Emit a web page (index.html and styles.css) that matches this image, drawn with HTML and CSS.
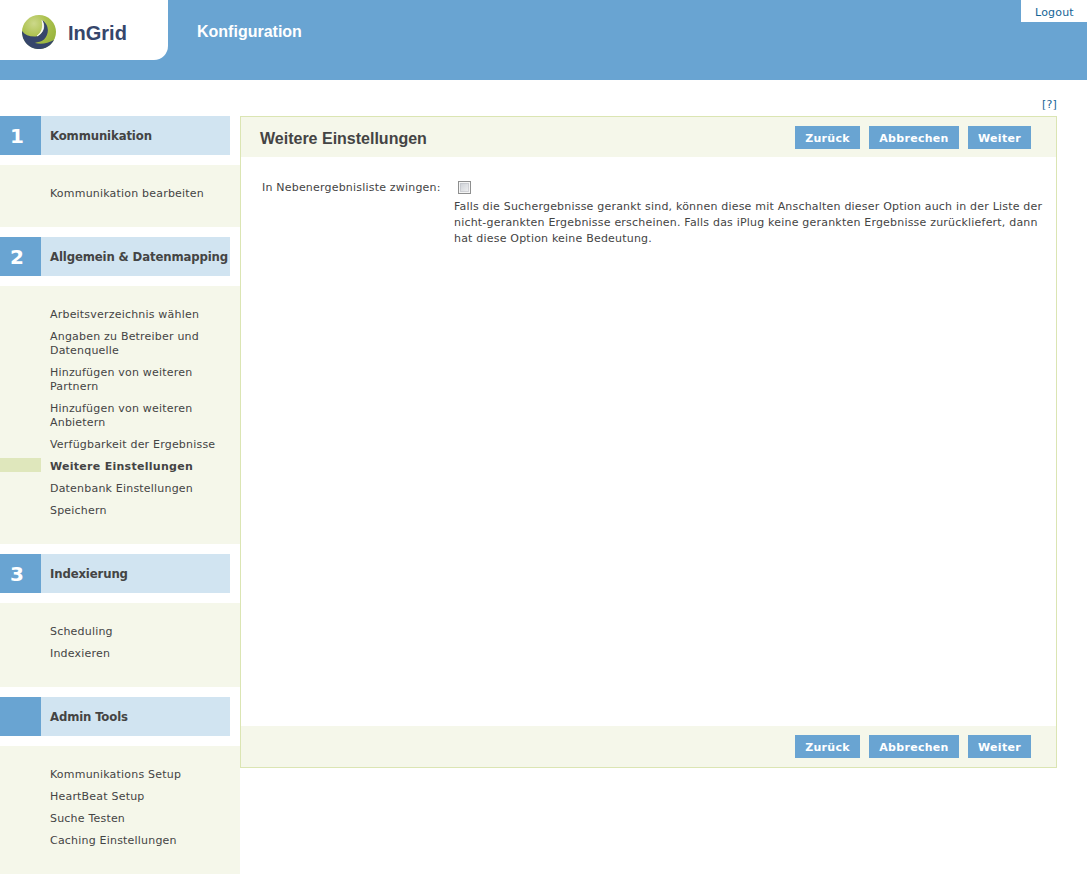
FILE: index.html
```html
<!DOCTYPE html>
<html lang="de">
<head>
<meta charset="utf-8">
<title>InGrid Konfiguration</title>
<link rel="stylesheet" href="styles.css">
</head>
<body>
<header class="header">
  <div class="brand">
    <svg class="brand-mark" width="34" height="34" viewBox="0 0 34 34" aria-hidden="true">
      <defs>
        <radialGradient id="leaf" cx="0.35" cy="0.25" r="0.75">
          <stop offset="0" stop-color="#ccd88a"/>
          <stop offset="0.5" stop-color="#adc24f"/>
          <stop offset="1" stop-color="#98b43c"/>
        </radialGradient>
      </defs>
      <circle cx="17" cy="17" r="17" fill="url(#leaf)"/>
      <path d="M20 5C28 10 27 20 22 24.500C18 27.500 14 27 13 28C19 29.500 26 28.500 32 25A17 17 0 0 1 0 16C3 20 8 22 14 21.500C21 20 23.500 12 20 5Z" fill="#36466b"/>
      <path d="M20 5.500C23.500 11 21.500 18 15 21C20 17.500 21.500 12 20 5.500Z" fill="#fff" stroke="#fff" stroke-width=".7"/>
    </svg>
    <span class="brand-name">InGrid</span>
  </div>
  <h1 class="page-title">Konfiguration</h1>
  <a class="logout">Logout</a>
</header>
<div class="help"><a>[?]</a></div>
<div class="layout">
  <nav class="sidebar">
    <h2 class="step"><span class="step-no">1</span><span class="step-name">Kommunikation</span></h2>
    <ul class="links">
      <li><span class="link">Kommunikation bearbeiten</span></li>
    </ul>
    <h2 class="step"><span class="step-no">2</span><span class="step-name">Allgemein &amp; Datenmapping</span></h2>
    <ul class="links">
      <li><span class="link">Arbeitsverzeichnis wählen</span></li>
      <li><span class="link">Angaben zu Betreiber und<br>Datenquelle</span></li>
      <li><span class="link">Hinzufügen von weiteren<br>Partnern</span></li>
      <li><span class="link">Hinzufügen von weiteren<br>Anbietern</span></li>
      <li><span class="link">Verfügbarkeit der Ergebnisse</span></li>
      <li class="active"><span class="link">Weitere Einstellungen</span></li>
      <li><span class="link">Datenbank Einstellungen</span></li>
      <li><span class="link">Speichern</span></li>
    </ul>
    <h2 class="step"><span class="step-no">3</span><span class="step-name">Indexierung</span></h2>
    <ul class="links">
      <li><span class="link">Scheduling</span></li>
      <li><span class="link">Indexieren</span></li>
    </ul>
    <h2 class="step"><span class="step-no"></span><span class="step-name">Admin Tools</span></h2>
    <ul class="links">
      <li><span class="link">Kommunikations Setup</span></li>
      <li><span class="link">HeartBeat Setup</span></li>
      <li><span class="link">Suche Testen</span></li>
      <li><span class="link">Caching Einstellungen</span></li>
    </ul>
  </nav>
  <main class="panel">
    <div class="panel-bar">
      <h2 class="panel-title">Weitere Einstellungen</h2>
      <div class="buttons"><a class="btn back">Zurück</a><a class="btn cancel">Abbrechen</a><a class="btn next">Weiter</a></div>
    </div>
    <div class="panel-body">
      <label class="field-label" for="force">In Nebenergebnisliste zwingen:</label>
      <div class="field">
        <input class="check" type="checkbox" id="force">
        <p class="hint">Falls die Suchergebnisse gerankt sind, können diese mit Anschalten dieser Option auch in der Liste der<br>nicht-gerankten Ergebnisse erscheinen. Falls das iPlug keine gerankten Ergebnisse zurückliefert, dann<br>hat diese Option keine Bedeutung.</p>
      </div>
    </div>
    <div class="panel-bar panel-foot">
      <div class="buttons"><a class="btn back">Zurück</a><a class="btn cancel">Abbrechen</a><a class="btn next">Weiter</a></div>
    </div>
  </main>
</div>
</body>
</html>
```
FILE: styles.css
```css
* { box-sizing: border-box; }
body {
  margin: 0;
  background: #fff;
  color: #444;
  font: 11px/14px "DejaVu Sans", sans-serif;
  letter-spacing: .2px;
}
h1, h2, ul, p { margin: 0; padding: 0; }
.header {
  display: flex;
  align-items: flex-start;
  height: 80px;
  background: #69a4d2;
}
.brand {
  display: flex;
  width: 168px;
  height: 60px;
  padding: 15px 0 0 22px;
  background: #fff;
  border-bottom-right-radius: 14px;
}
.brand-mark { flex: none; }
.brand-name {
  margin: 7px 0 0 12px;
  color: #36466b;
  font: bold 20px/23px "Liberation Sans", sans-serif;
  letter-spacing: 0;
}
.page-title {
  margin: 22px 0 0 29px;
  color: #fff;
  font: bold 16px/20px "Liberation Sans", sans-serif;
  letter-spacing: 0;
}
.logout {
  width: 66px;
  height: 22px;
  margin-left: auto;
  padding: 6px 0 0 14px;
  background: #fff;
  color: #156496;
}
.help {
  height: 36px;
  padding: 18px 30px 0 0;
  color: #156496;
  text-align: right;
}
.layout { display: flex; align-items: flex-start; }
.sidebar { flex: none; width: 240px; }
.step {
  display: flex;
  width: 230px;
  height: 39px;
  margin-bottom: 10px;
  background: #d1e4f1;
  font-size: 13px;
  line-height: 40px;
}
.step-no {
  flex: none;
  width: 41px;
  padding-right: 7px;
  background: #69a4d2;
  color: #fff;
  font-size: 20px;
  line-height: 41px;
  text-align: center;
}
.step-name {
  padding-left: 9px;
  font-family: "DejaVu Sans Condensed", "DejaVu Sans", sans-serif;
  font-stretch: condensed;
  letter-spacing: -.13px;
  line-height: 39px;
  white-space: nowrap;
}
.links {
  display: flex;
  flex-direction: column;
  gap: 6px;
  margin-bottom: 10px;
  padding: 20px 0 26px;
  background: #f5f7ea;
  list-style: none;
}
.links li { padding: 2px 0 0 50px; white-space: nowrap; }
.links .active {
  background: linear-gradient(#dfe7bc, #dfe7bc) 0 0 / 41px 14px no-repeat;
  font-weight: bold;
  letter-spacing: .28px;
}
.panel {
  display: flex;
  flex-direction: column;
  width: 817px;
  height: 652px;
  border: 1px solid #dbe5b3;
}
.panel-bar {
  display: flex;
  justify-content: space-between;
  height: 40px;
  padding: 9px 25px 0 19px;
  background: #f5f7ea;
}
.panel-foot { height: 41px; justify-content: flex-end; }
.panel-title {
  padding-top: 3px;
  font: bold 16px/20px "Liberation Sans", sans-serif;
  letter-spacing: 0;
}
.buttons { display: flex; gap: 9px; }
.btn {
  height: 23px;
  background: #69a4d2;
  color: #fff;
  font-weight: bold;
  letter-spacing: .3px;
  line-height: 25px;
  text-align: center;
}
.back { width: 65px; }
.cancel { width: 90px; }
.next { width: 63px; }
.panel-body { display: flex; flex: 1; padding: 24px 0 0 21px; }
.field-label { width: 192px; white-space: nowrap; }
.check {
  display: block;
  appearance: none;
  width: 13px;
  height: 13px;
  margin: 0 0 5px 4px;
  border: 1px solid #8e8f8f;
  background: linear-gradient(135deg, #c9cdd3, #f4f4f4);
  box-shadow: inset 0 0 0 1px #f4f4f4, inset 0 0 0 2px #b9bcc280;
}
.hint { line-height: 16px; white-space: nowrap; }
```
